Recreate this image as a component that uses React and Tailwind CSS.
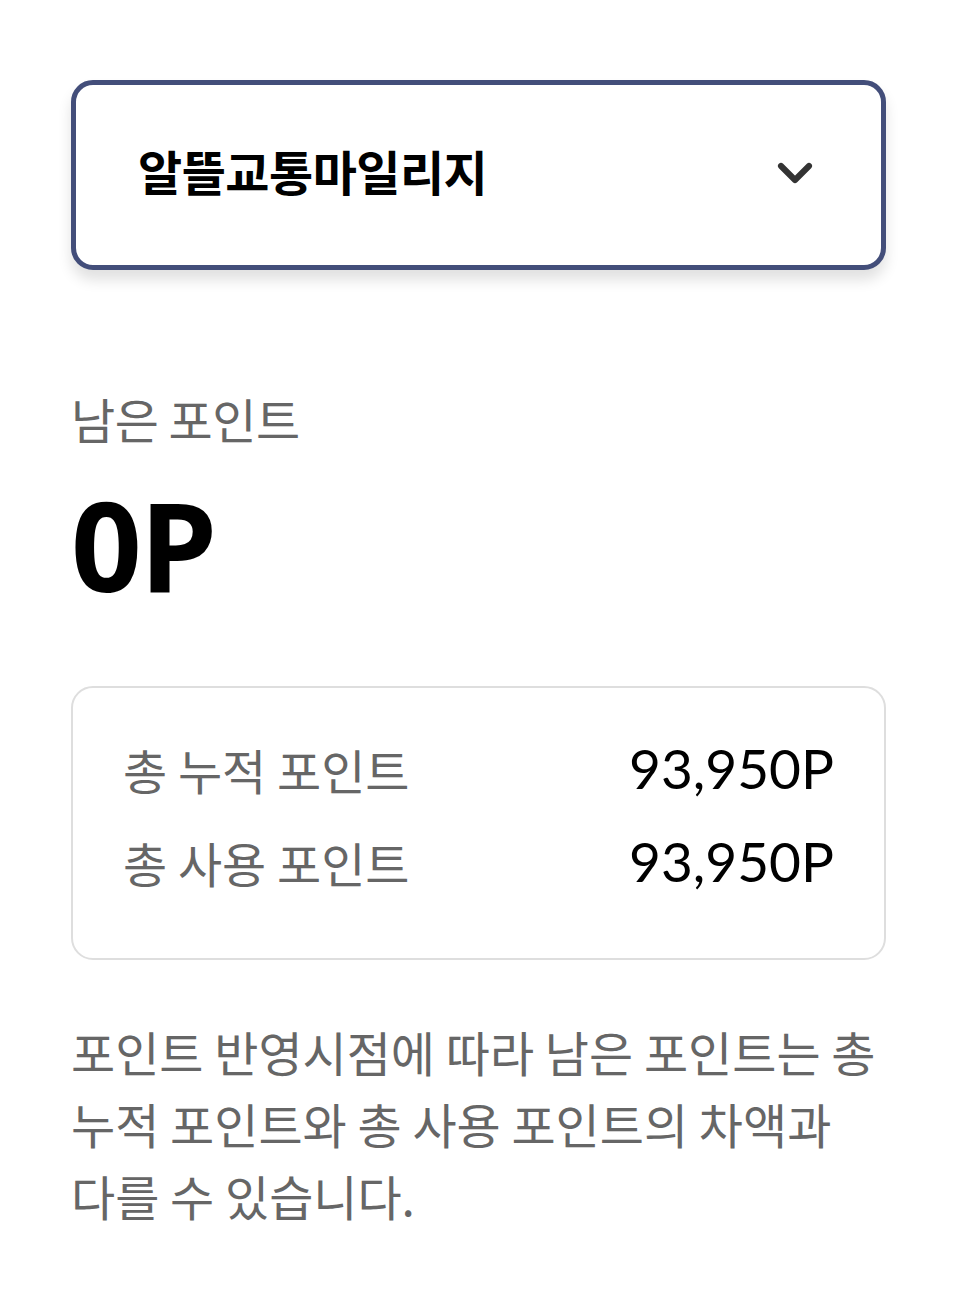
import { ChevronDown } from 'lucide-react';

const kr = { fontFamily: '"Noto Sans CJK KR", "Noto Sans", sans-serif' };

function App() {
  return (
    <div className="min-h-[1293px] bg-white px-[71px] pt-[80px]" style={kr}>
      <button
        type="button"
        className="flex h-[190px] w-full items-center justify-between rounded-[22px] border-[5px] border-[#434e7a] bg-white pl-[62px] pr-[58px] shadow-[0_10px_14px_rgba(0,0,0,0.12)]"
      >
        <span className="-mt-[10px] text-[48px] font-bold leading-none tracking-[-0.5px] text-black">알뜰교통마일리지</span>
        <ChevronDown size={56} strokeWidth={2.6} className="-mt-[4px] text-[#333]" />
      </button>

      <p className="mt-[124px] text-[48px] leading-none tracking-[-0.5px] text-[#666]">남은 포인트</p>
      <p className="mt-[40px] text-[124px] font-bold leading-none tracking-[-2px] text-black" style={{ fontFamily: '"Noto Sans", sans-serif' }}>
        0P
      </p>

      <div className="mt-[80px] rounded-[22px] border-2 border-[#dedede] px-[50px] pb-[69px] pt-[53px]">
        <div className="flex items-center justify-between">
          <span className="text-[48px] leading-none text-[#666]">총 누적 포인트</span>
          <span className="text-[55px] leading-none text-black" style={{ fontFamily: 'Lato, sans-serif' }}>93,950P</span>
        </div>
        <div className="mt-[38px] flex items-center justify-between">
          <span className="text-[48px] leading-none text-[#666]">총 사용 포인트</span>
          <span className="text-[55px] leading-none text-black" style={{ fontFamily: 'Lato, sans-serif' }}>93,950P</span>
        </div>
      </div>

      <p className="mt-[55px] break-keep text-[48px] leading-[72px] text-[#666]">
        포인트 반영시점에 따라 남은 포인트는 총 누적 포인트와 총 사용 포인트의 차액과 다를 수 있습니다.
      </p>
    </div>
  );
}

export default App;
